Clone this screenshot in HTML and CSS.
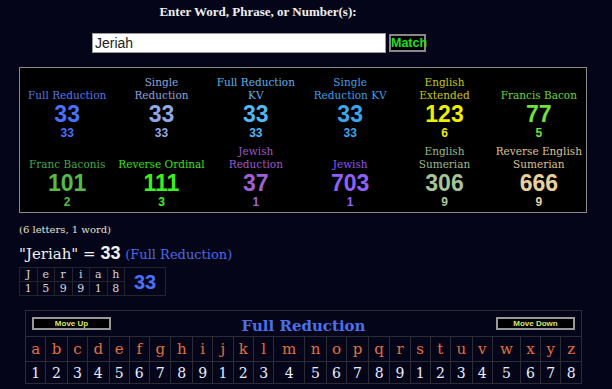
FILE: index.html
```html
<!DOCTYPE html>
<html lang="en">
<head>
   <meta charset="UTF-8">
   <title>Gematria</title>
   <link rel="stylesheet" href="styles.css">
</head>
<body>
   <header class="entry">
      <h1>Enter Word, Phrase, or Number(s):</h1>
      <div class="entry-row">
         <input type="text" class="phrase" value="Jeriah">
         <button class="match">Match</button>
      </div>
   </header>

   <section class="results">
      <div class="cipher c-fr"><div class="label">Full Reduction</div><div class="big">33</div><div class="small">33</div></div>
      <div class="cipher c-sr"><div class="label">Single<br>Reduction</div><div class="big">33</div><div class="small">33</div></div>
      <div class="cipher c-frkv"><div class="label">Full Reduction<br>KV</div><div class="big">33</div><div class="small">33</div></div>
      <div class="cipher c-srkv"><div class="label">Single<br>Reduction KV</div><div class="big">33</div><div class="small">33</div></div>
      <div class="cipher c-ee"><div class="label">English<br>Extended</div><div class="big">123</div><div class="small">6</div></div>
      <div class="cipher c-fb"><div class="label">Francis Bacon</div><div class="big">77</div><div class="small">5</div></div>
      <div class="cipher c-fbs"><div class="label">Franc Baconis</div><div class="big">101</div><div class="small">2</div></div>
      <div class="cipher c-ro"><div class="label">Reverse Ordinal</div><div class="big">111</div><div class="small">3</div></div>
      <div class="cipher c-jr"><div class="label">Jewish<br>Reduction</div><div class="big">37</div><div class="small">1</div></div>
      <div class="cipher c-j"><div class="label">Jewish</div><div class="big">703</div><div class="small">1</div></div>
      <div class="cipher c-es"><div class="label">English<br>Sumerian</div><div class="big">306</div><div class="small">9</div></div>
      <div class="cipher c-res"><div class="label">Reverse English<br>Sumerian</div><div class="big">666</div><div class="small">9</div></div>
   </section>

   <p class="count">(6 letters, 1 word)</p>
   <p class="equation">"Jeriah" = <b>33</b> <span class="eq-name">(Full Reduction)</span></p>

   <table class="breakdown">
      <tr>
         <td>J</td><td>e</td><td>r</td><td>i</td><td>a</td><td>h</td>
         <td class="total" rowspan="2">33</td>
      </tr>
      <tr>
         <td>1</td><td>5</td><td>9</td><td>9</td><td>1</td><td>8</td>
      </tr>
   </table>

   <table class="chart">
      <tr>
         <td class="chart-head" colspan="26">
            <div class="head-row">
               <button class="move">Move Up</button>
               <span class="chart-title">Full Reduction</span>
               <button class="move">Move Down</button>
            </div>
         </td>
      </tr>
      <tr class="letters" id="letters"></tr>
      <tr class="values" id="values"></tr>
   </table>

   <script>
      // Tabela do alfabeto com os valores de redução
      const letters = document.getElementById('letters');
      const values = document.getElementById('values');
      'abcdefghijklmnopqrstuvwxyz'.split('').forEach((ch, i) => {
         const l = document.createElement('td');
         l.textContent = ch;
         letters.appendChild(l);
         const v = document.createElement('td');
         v.textContent = (i % 9) + 1;
         values.appendChild(v);
      });
   </script>
</body>
</html>
```

FILE: styles.css
```css
* {
   margin: 0;
   padding: 0;
   box-sizing: border-box;
}

body {
   background-color: #05051a;
   font-family: "DejaVu Serif", serif;
   color: #e8e8e8;
}

/* Campo de entrada */
.entry {
   width: 516px;
   text-align: center;
   padding-top: 4px;
}

.entry h1 {
   font-family: "Liberation Serif", serif;
   font-size: 13px;
   font-weight: bold;
   line-height: 16px;
   color: #f0f0f0;
}

.entry-row {
   display: flex;
   align-items: center;
   margin-top: 13px;
   padding-left: 92px;
   gap: 3px;
}

.phrase {
   width: 294px;
   height: 20px;
   border: 1px solid #999;
   padding: 0 2px;
   font-family: "Liberation Sans", Arial, sans-serif;
   font-size: 14px;
   color: #222;
}

.match {
   width: 37px;
   height: 18px;
   background-color: #000;
   border: 2px solid #888;
   color: #1ee01e;
   font-family: "Liberation Sans", Arial, sans-serif;
   font-size: 12.5px;
   font-weight: bold;
   line-height: 14px;
}

/* Resultados */
.results {
   display: grid;
   grid-template-columns: repeat(6, 1fr);
   row-gap: 6px;
   width: 568px;
   margin: 14px 0 0 19px;
   padding: 8px 0 4px;
   background-color: #000;
   border: 1px solid #8a8a8a;
}

.cipher {
   display: flex;
   flex-direction: column;
   align-items: center;
   text-align: center;
}

.label {
   height: 25px;
   display: flex;
   flex-direction: column;
   justify-content: flex-end;
   font-size: 10.5px;
   line-height: 12.5px;
}

.big {
   margin-top: 1px;
   font-family: "Liberation Sans", Arial, sans-serif;
   font-size: 23px;
   font-weight: bold;
   line-height: 25px;
}

.small {
   font-family: "Liberation Sans", Arial, sans-serif;
   font-size: 12px;
   font-weight: bold;
   line-height: 12px;
}

.c-fr .label { color: #5577e8; }
.c-fr .big, .c-fr .small { color: #4a70ff; }
.c-sr .label { color: #8ea4dc; }
.c-sr .big, .c-sr .small { color: #90a8e4; }
.c-frkv .label { color: #5ab0ec; }
.c-frkv .big, .c-frkv .small { color: #52b8f4; }
.c-srkv .label { color: #3f9ee6; }
.c-srkv .big, .c-srkv .small { color: #3aa6ee; }
.c-ee .label { color: #c8c810; }
.c-ee .big, .c-ee .small { color: #eeee00; }
.c-fb .label { color: #66d633; }
.c-fb .big, .c-fb .small { color: #70e23a; }
.c-fbs .label { color: #44a848; }
.c-fbs .big, .c-fbs .small { color: #55bb44; }
.c-ro .label { color: #33e018; }
.c-ro .big, .c-ro .small { color: #3ef020; }
.c-jr .label { color: #9958cc; }
.c-jr .big, .c-jr .small { color: #a060d4; }
.c-j .label { color: #8a58f0; }
.c-j .big, .c-j .small { color: #9060ff; }
.c-es .label { color: #9cba8c; }
.c-es .big, .c-es .small { color: #a6c496; }
.c-res .label { color: #dcc290; }
.c-res .big, .c-res .small { color: #e8d09c; }

/* Linha da equação */
.count {
   margin: 11px 0 0 19px;
   font-size: 10px;
   line-height: 12px;
   color: #e4e0c8;
}

.equation {
   margin: 8px 0 0 19px;
   font-size: 15px;
   line-height: 18px;
   color: #f0f0f0;
}

.equation b {
   font-family: "Liberation Sans", Arial, sans-serif;
   font-size: 18px;
}

.eq-name {
   font-size: 13px;
   color: #4a6ae4;
}

.breakdown {
   margin: 3px 0 0 19px;
   border-collapse: collapse;
}

.breakdown td {
   width: 17.5px;
   height: 14px;
   border: 1px solid #24242c;
   text-align: center;
   font-size: 11px;
   line-height: 12px;
   color: #d8d8d8;
}

.breakdown .total {
   width: 41px;
   font-family: "Liberation Sans", Arial, sans-serif;
   font-size: 20px;
   font-weight: bold;
   color: #4a70ff;
}

/* Tabela do alfabeto */
.chart {
   width: 557px;
   margin: 14px 0 0 25px;
   border-collapse: collapse;
   border: 1px solid #2c2c34;
}

.chart td {
   border: 1px solid #2c2c34;
   text-align: center;
}

.chart-head {
   height: 26px;
   padding: 0 6px;
}

.head-row {
   display: flex;
   justify-content: space-between;
   align-items: center;
}

.move {
   width: 79px;
   height: 13px;
   background-color: #000;
   border: 2px solid #999;
   color: #d6e86a;
   font-family: "Liberation Sans", Arial, sans-serif;
   font-size: 8px;
   font-weight: bold;
   line-height: 9px;
}

.chart-title {
   font-size: 15px;
   font-weight: bold;
   color: #4a70ec;
   padding-top: 5px;
}

.letters td {
   height: 25px;
   font-size: 15px;
   color: #e0703c;
}

.values td {
   height: 22px;
   font-size: 14px;
   color: #eaf0ff;
}
```
